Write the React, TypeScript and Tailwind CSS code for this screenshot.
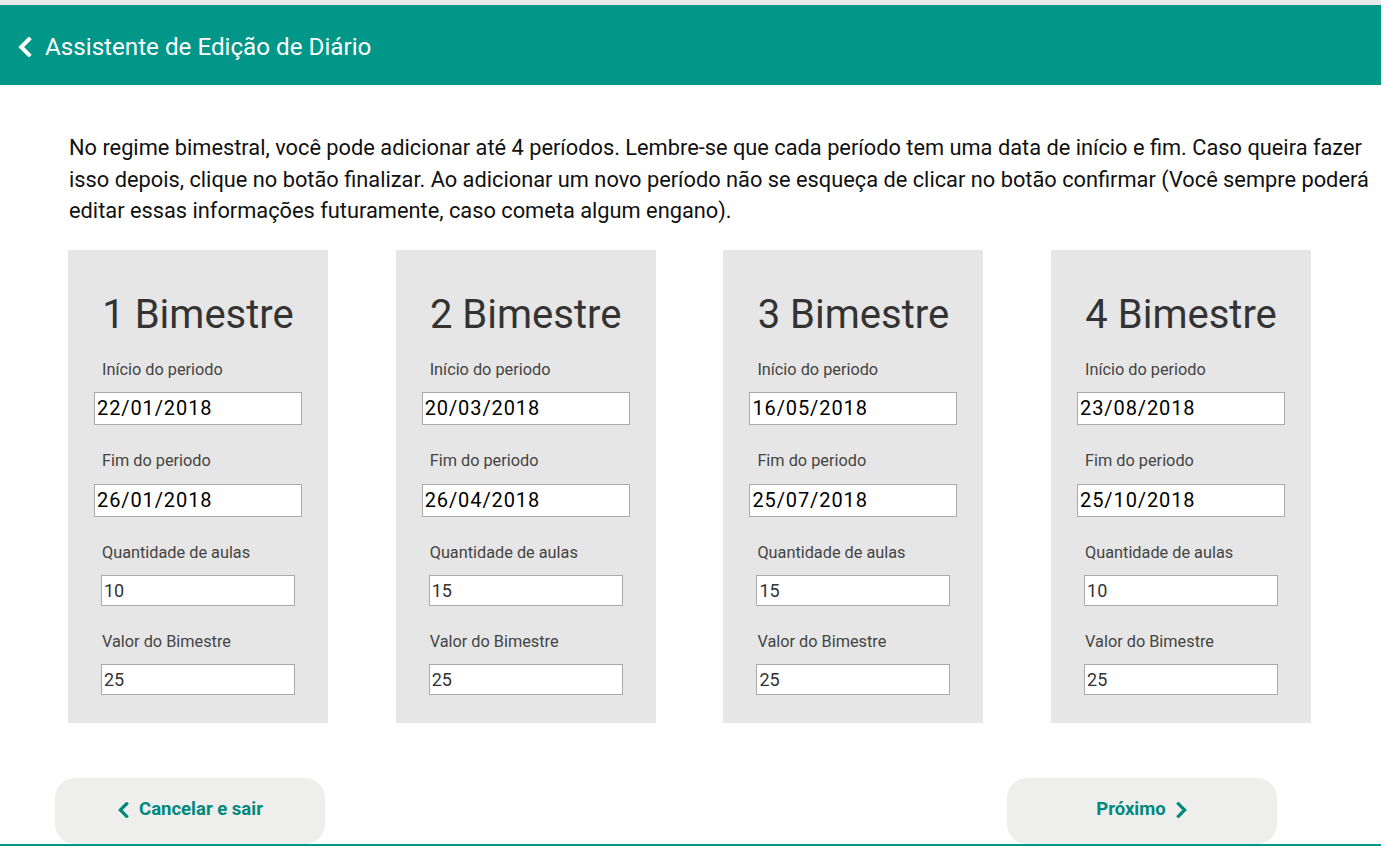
type Periodo = {
    titulo: string;
    inicio: string;
    fim: string;
    aulas: string;
    valor: string;
};

const periodos: Periodo[] = [
    { titulo: "1 Bimestre", inicio: "22/01/2018", fim: "26/01/2018", aulas: "10", valor: "25" },
    { titulo: "2 Bimestre", inicio: "20/03/2018", fim: "26/04/2018", aulas: "15", valor: "25" },
    { titulo: "3 Bimestre", inicio: "16/05/2018", fim: "25/07/2018", aulas: "15", valor: "25" },
    { titulo: "4 Bimestre", inicio: "23/08/2018", fim: "25/10/2018", aulas: "10", valor: "25" },
];

// chevron grosso, no estilo do font-awesome
const Chevron = ({ dir, w, h, stroke }: { dir: "left" | "right"; w: number; h: number; stroke: number }) => (
    <svg width={w} height={h} viewBox="0 0 12 18" fill="none">
        <polyline
            points={dir === "left" ? "10,2 3,9 10,16" : "2,2 9,9 2,16"}
            stroke="currentColor"
            strokeWidth={stroke}
            strokeLinecap="square"
            strokeLinejoin="miter"
        />
    </svg>
);

const PeriodoCard = ({ periodo }: { periodo: Periodo }) => {
    return (
        <div className="w-[260px] bg-[#e6e6e6] pt-[42px] pb-[28px] flex flex-col">
            <h2 className="text-center text-[40px] leading-[46px] text-[#333]">{periodo.titulo}</h2>

            <label className="mt-[22px] ml-[34px] text-[16.3px] leading-[20px] text-[#444]">Início do periodo</label>
            <input
                defaultValue={periodo.inicio}
                className="mt-[12px] ml-[26px] w-[208px] h-[33px] bg-white border border-[#aaa] px-[2px] text-[20px] text-black tracking-[0.9px] outline-none"
            />

            <label className="mt-[26px] ml-[34px] text-[16.3px] leading-[20px] text-[#444]">Fim do periodo</label>
            <input
                defaultValue={periodo.fim}
                className="mt-[13px] ml-[26px] w-[208px] h-[33px] bg-white border border-[#aaa] px-[2px] text-[20px] text-black tracking-[0.9px] outline-none"
            />

            <label className="mt-[26px] ml-[34px] text-[16.3px] leading-[20px] text-[#444]">Quantidade de aulas</label>
            <input
                defaultValue={periodo.aulas}
                className="mt-[12px] ml-[33px] w-[194px] h-[31px] bg-white border border-[#aaa] px-[2px] text-[18px] text-[#333] outline-none"
            />

            <label className="mt-[26px] ml-[34px] text-[16.3px] leading-[20px] text-[#444]">Valor do Bimestre</label>
            <input
                defaultValue={periodo.valor}
                className="mt-[12px] ml-[33px] w-[194px] h-[31px] bg-white border border-[#aaa] px-[2px] text-[18px] text-[#333] outline-none"
            />
        </div>
    );
};

export default function App() {
    return (
        <div className="w-[1381px] min-h-[853px] bg-white font-['Roboto',sans-serif]">
            <div className="h-[5px] bg-[#e9e9e9]" />
            <header className="h-[80px] bg-[#009688] flex items-center pl-[17px] pt-[4px] text-white">
                <Chevron dir="left" w={15} h={20} stroke={3.6} />
                <h1 className="ml-[13px] text-[24.2px]">Assistente de Edição de Diário</h1>
            </header>

            <div className="pt-[47px] pl-[69px]">
                <p className="w-[1304px] text-[21.8px] leading-[31.5px] text-[#111]">
                    No regime bimestral, você pode adicionar até 4 períodos. Lembre-se que cada período tem uma data de início e fim. Caso queira fazer isso depois, clique no botão finalizar. Ao adicionar um novo período não se esqueça de clicar no botão confirmar (Você sempre poderá editar essas informações futuramente, caso cometa algum engano).
                </p>
            </div>

            <div className="mt-[23px] pl-[68px] flex gap-[67.7px]">
                {periodos.map((p) => (
                    <PeriodoCard key={p.titulo} periodo={p} />
                ))}
            </div>

            <div className="mt-[55px] pl-[55px] pr-[104px] flex justify-between">
                <button className="w-[270px] h-[66px] rounded-[20px] bg-[#eeeeec] flex items-center justify-center gap-[10px] pb-[2px] text-[18.5px] font-bold text-[#00897b]">
                    <Chevron dir="left" w={12} h={16} stroke={3.6} />
                    Cancelar e sair
                </button>
                <button className="w-[270px] h-[66px] rounded-[20px] bg-[#eeeeec] flex items-center justify-center gap-[10px] pb-[2px] text-[18.5px] font-bold text-[#00897b]">
                    Próximo
                    <Chevron dir="right" w={12} h={16} stroke={3.6} />
                </button>
            </div>
            <div className="h-[2px] bg-[#009688]" />
        </div>
    );
}
